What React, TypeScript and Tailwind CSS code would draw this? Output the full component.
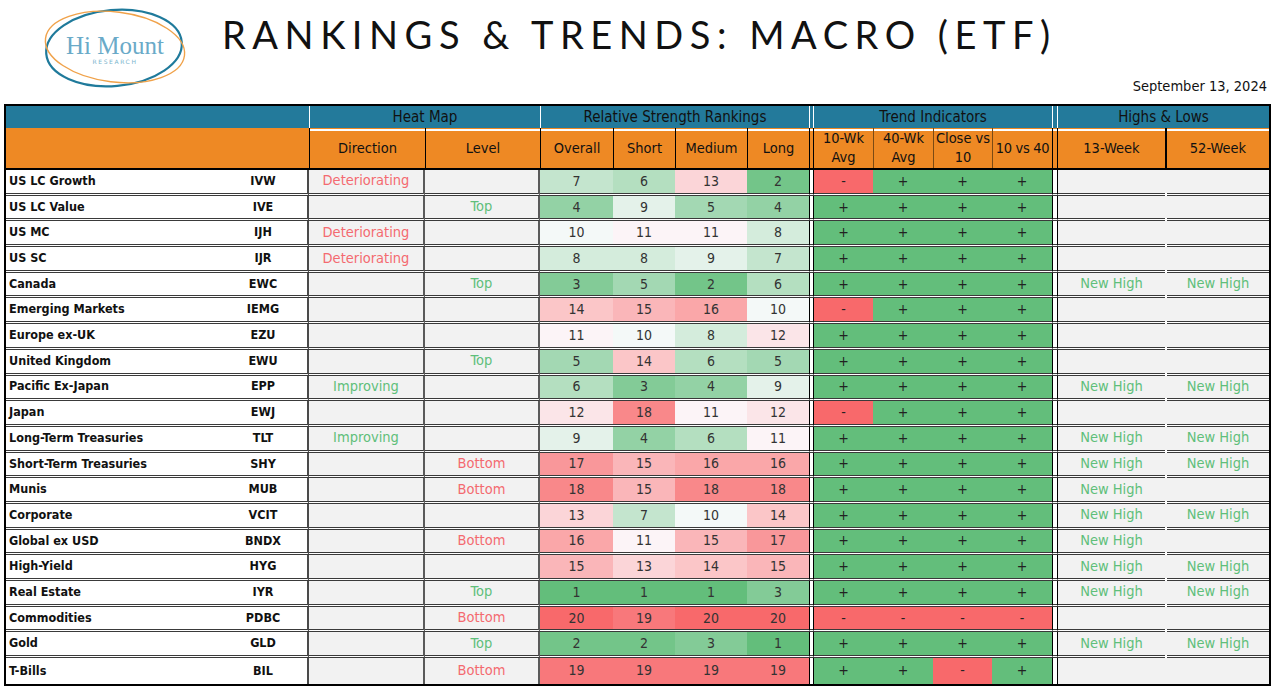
import React from 'react';

type Row = {
  name: string;
  ticker: string;
  dir: string;
  level: string;
  ranks: number[];
  trend: string[];
  h13: string;
  h52: string;
};

const raw: [string, string, string, string, number[], string, string, string][] = [
  ['US LC Growth', 'IVW', 'Deteriorating', '', [7, 6, 13, 2], '-+++', '', ''],
  ['US LC Value', 'IVE', '', 'Top', [4, 9, 5, 4], '++++', '', ''],
  ['US MC', 'IJH', 'Deteriorating', '', [10, 11, 11, 8], '++++', '', ''],
  ['US SC', 'IJR', 'Deteriorating', '', [8, 8, 9, 7], '++++', '', ''],
  ['Canada', 'EWC', '', 'Top', [3, 5, 2, 6], '++++', 'New High', 'New High'],
  ['Emerging Markets', 'IEMG', '', '', [14, 15, 16, 10], '-+++', '', ''],
  ['Europe ex-UK', 'EZU', '', '', [11, 10, 8, 12], '++++', '', ''],
  ['United Kingdom', 'EWU', '', 'Top', [5, 14, 6, 5], '++++', '', ''],
  ['Pacific Ex-Japan', 'EPP', 'Improving', '', [6, 3, 4, 9], '++++', 'New High', 'New High'],
  ['Japan', 'EWJ', '', '', [12, 18, 11, 12], '-+++', '', ''],
  ['Long-Term Treasuries', 'TLT', 'Improving', '', [9, 4, 6, 11], '++++', 'New High', 'New High'],
  ['Short-Term Treasuries', 'SHY', '', 'Bottom', [17, 15, 16, 16], '++++', 'New High', 'New High'],
  ['Munis', 'MUB', '', 'Bottom', [18, 15, 18, 18], '++++', 'New High', ''],
  ['Corporate', 'VCIT', '', '', [13, 7, 10, 14], '++++', 'New High', 'New High'],
  ['Global ex USD', 'BNDX', '', 'Bottom', [16, 11, 15, 17], '++++', 'New High', ''],
  ['High-Yield', 'HYG', '', '', [15, 13, 14, 15], '++++', 'New High', 'New High'],
  ['Real Estate', 'IYR', '', 'Top', [1, 1, 1, 3], '++++', 'New High', 'New High'],
  ['Commodities', 'PDBC', '', 'Bottom', [20, 19, 20, 20], '----', '', ''],
  ['Gold', 'GLD', '', 'Top', [2, 2, 3, 1], '++++', 'New High', 'New High'],
  ['T-Bills', 'BIL', '', 'Bottom', [19, 19, 19, 19], '++-+', '', ''],
];

const rows: Row[] = raw.map(([name, ticker, dir, level, ranks, t, h13, h52]) => ({
  name,
  ticker,
  dir,
  level,
  ranks,
  trend: t.split(''),
  h13,
  h52,
}));

// Excel-style 3 colour scale: 1 = green, middle = white, 20 = red
function heat(v: number) {
  const mid = 10.5;
  const white = [252, 252, 255];
  const green = [99, 190, 123];
  const red = [248, 105, 107];
  const target = v <= mid ? green : red;
  const t = Math.abs(v - mid) / 9.5;
  const c = white.map((w, i) => Math.round(w + (target[i] - w) * t));
  return `rgb(${c[0]},${c[1]},${c[2]})`;
}

const GRID =
  'grid grid-cols-[303px_116px_115px_73px_62px_72px_62px_5px_59px_60px_59px_60px_6px_107px_2px_102px]';

const good = 'text-[#5fbf7a]';
const bad = 'text-[#f46a70]';

function Logo() {
  return (
    <svg width="150" height="90" viewBox="0 0 150 90">
      <ellipse cx="74" cy="46" rx="68" ry="38" fill="none" stroke="#1f7a9b" strokeWidth="2.2" transform="rotate(-5 74 46)" />
      <ellipse cx="75" cy="45" rx="70" ry="35" fill="none" stroke="#f0a24a" strokeWidth="1.4" transform="rotate(7 75 45)" />
      <text x="75" y="52" textAnchor="middle" fontFamily="'Liberation Serif', serif" fontSize="25" fill="#6aaac8">
        Hi Mount
      </text>
      <text x="75" y="62" textAnchor="middle" fontFamily="'DejaVu Sans', sans-serif" fontSize="6" letterSpacing="1.6" fill="#7ab4cd">
        RESEARCH
      </text>
    </svg>
  );
}

export default function App() {
  return (
    <div className="w-[1280px] h-[693px] bg-white overflow-hidden font-['DejaVu_Sans_Condensed','DejaVu_Sans',sans-serif] text-[#111]">
      {/* title bar */}
      <div className="h-[74px] flex items-start">
        <div className="ml-[40px] mt-[2px]">
          <Logo />
        </div>
        <div className="ml-[32px] mt-[15px] font-['Lato',sans-serif] font-normal text-[38px] tracking-[0.172em] text-[#111] leading-none">
          RANKINGS &amp; TRENDS: MACRO (ETF)
        </div>
      </div>
      <div className="h-[26px] flex items-center justify-end pr-[13px] text-[14.5px]">September 13, 2024</div>

      <div className="mt-[4px] ml-[4px] w-[1267px] border-2 border-black">
        {/* group header */}
        <div className={`${GRID} h-[22px] bg-[#237a9b] text-[15px]`}>
          <div />
          <div className="col-span-2 border-l border-b-2 border-white flex items-center justify-center">Heat Map</div>
          <div className="col-span-4 border-l border-b-2 border-white flex items-center justify-center">Relative Strength Rankings</div>
          <div className="border-x border-b-2 border-white" />
          <div className="col-span-4 border-b-2 border-white flex items-center justify-center">Trend Indicators</div>
          <div className="border-x border-b-2 border-white" />
          <div className="col-span-3 border-b-2 border-white flex items-center justify-center">Highs &amp; Lows</div>
        </div>

        {/* column header */}
        <div className={`${GRID} h-[42px] bg-[#ee8924] text-[14.5px] border-b-2 border-black text-center leading-[19px]`}>
          <div />
          <div className="border-l border-black flex items-center justify-center">Direction</div>
          <div className="border-l border-black flex items-center justify-center">Level</div>
          <div className="border-l border-black flex items-center justify-center">Overall</div>
          <div className="border-l border-black flex items-center justify-center">Short</div>
          <div className="border-l border-black flex items-center justify-center">Medium</div>
          <div className="border-l border-black flex items-center justify-center">Long</div>
          <div className="border-x border-black" />
          <div className="flex items-center justify-center">10-Wk<br />Avg</div>
          <div className="border-l border-[#7a4a14] flex items-center justify-center">40-Wk<br />Avg</div>
          <div className="border-l border-[#7a4a14] flex items-center justify-center">Close vs<br />10</div>
          <div className="border-l border-[#7a4a14] flex items-center justify-center tracking-[-0.02em]">10 vs 40</div>
          <div className="border-x border-black" />
          <div className="flex items-center justify-center">13-Week</div>
          <div className="border-x border-black" />
          <div className="flex items-center justify-center">52-Week</div>
        </div>

        {/* body */}
        {rows.map((r, i) => {
          const last = i === rows.length - 1;
          const sep = last ? '' : 'border-b-[3px] border-double border-b-[#3a3a3a] bg-clip-padding';
          return (
            <div key={r.ticker} className={`${GRID} h-[25.7px] text-[14.5px]`}>
              <div className={`flex items-center bg-white border-r-2 border-r-[#4a4a4a] text-[12.5px] ${sep}`}>
                <span className="w-[217px] pl-[3px] font-bold truncate">{r.name}</span>
                <span className="w-[80px] text-center font-bold">{r.ticker}</span>
              </div>
              <div className={`flex items-center justify-center bg-[#f2f2f2] border-r-2 border-r-[#5a5a5a] ${sep} ${r.dir === 'Improving' ? good : bad}`}>
                {r.dir}
              </div>
              <div className={`flex items-center justify-center bg-[#f2f2f2] border-r-2 border-r-[#5a5a5a] ${sep} ${r.level === 'Top' ? good : bad}`}>
                {r.level}
              </div>
              {r.ranks.map((v, k) => (
                <div key={k} className={`flex items-center justify-center text-[#333] text-[14px] ${sep}`} style={{ backgroundColor: heat(v) }}>
                  {v}
                </div>
              ))}
              <div className={`bg-white border-x border-x-black ${sep}`} />
              {r.trend.map((t, k) => (
                <div key={k} className={`flex items-center justify-center text-[#222] text-[14px] ${sep} ${t === '+' ? 'bg-[#63be7b]' : 'bg-[#f8696b]'}`}>
                  {t}
                </div>
              ))}
              <div className={`bg-white border-x border-x-black ${sep}`} />
              <div className={`flex items-center justify-center bg-[#f2f2f2] ${good} ${sep}`}>{r.h13}</div>
              <div className={`bg-[#f2f2f2] ${last ? '' : 'border-b-[3px] border-double border-b-white bg-clip-padding'}`} />
              <div className={`flex items-center justify-center bg-[#f2f2f2] ${good} ${sep}`}>{r.h52}</div>
            </div>
          );
        })}
      </div>
    </div>
  );
}
